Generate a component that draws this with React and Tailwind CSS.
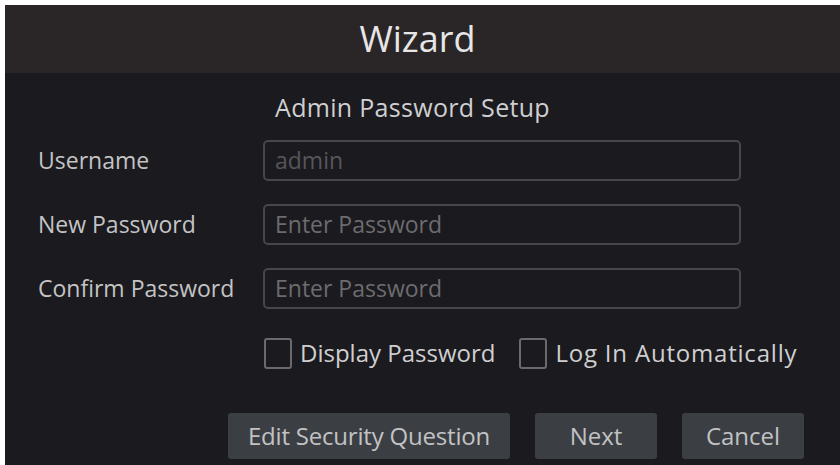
import React from "react";

const font = "font-['Open_Sans','Noto_Sans',sans-serif]";

const Field = ({ label, value, muted }) => (
  <div className="flex items-center h-[41px]">
    <div className="w-[225px] text-[23px] text-[#c4c4c6] leading-none">{label}</div>
    <div className="w-[478px] h-[41px] border-2 border-[#46464b] rounded-[5px] flex items-center px-[10px]">
      <span className={`text-[23px] leading-none ${muted ? "text-[#56565a]" : "text-[#6c6c70]"}`}>{value}</span>
    </div>
  </div>
);

const Check = ({ label, size }) => (
  <div className="flex items-center gap-[8px]">
    <div className="w-[28px] h-[31px] border-2 border-[#6a6a6e] rounded-[3px]"></div>
    <span className={`${size} text-[#cfcfd1] leading-none`}>{label}</span>
  </div>
);

const Btn = ({ children, w }) => (
  <div className={`${w} h-[46px] bg-[#3b3e43] rounded-[3px] flex items-center justify-center text-[24px] text-[#c2c2c4]`}>
    {children}
  </div>
);

const App = () => {
  return (
    <div className={`w-[840px] h-[465px] bg-white pt-[5px] pl-[5px] overflow-hidden ${font}`}>
      <div className="w-[835px] h-[460px] flex flex-col bg-[#1b1a1e]">
        <div className="h-[68px] bg-[#2a2627] flex items-center justify-center">
          <span className="text-[36px] text-[#e6e6e6] leading-none pr-[10px]">Wizard</span>
        </div>
        <div className="flex-1 flex flex-col">
          <div className="h-[68px] flex items-center justify-center pr-[20px]">
            <span className="text-[25px] text-[#cfcfd1] leading-none tracking-[0.3px]">Admin Password Setup</span>
          </div>
          <div className="pl-[33px] flex flex-col gap-[23px] -mt-[1px]">
            <Field label="Username" value="admin" muted />
            <Field label="New Password" value="Enter Password" />
            <Field label="Confirm Password" value="Enter Password" />
          </div>
          <div className="pl-[259px] mt-[28px] flex items-center gap-[24px] h-[32px]">
            <Check label="Display Password" size="text-[24px]" />
            <Check label="Log In Automatically" size="text-[24px] tracking-[0.8px]" />
          </div>
          <div className="pl-[223px] mt-[44px] flex gap-[25px]">
            <Btn w="w-[282px] tracking-[-0.2px]">Edit Security Question</Btn>
            <Btn w="w-[122px]">Next</Btn>
            <Btn w="w-[122px]">Cancel</Btn>
          </div>
        </div>
      </div>
    </div>
  );
};

export default App;
